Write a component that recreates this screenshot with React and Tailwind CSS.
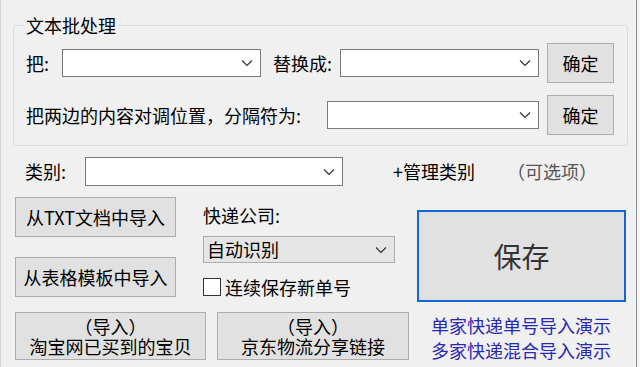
import React from "react";

const FONT = { fontFamily: '"Noto Sans CJK SC", "Noto Sans", sans-serif' };

function Chevron() {
  return (
    <svg width="12" height="8" viewBox="0 0 12 8" className="shrink-0">
      <polyline points="1,1.5 6,6.5 11,1.5" fill="none" stroke="#333" strokeWidth="1.2" />
    </svg>
  );
}

function Combo({ w, h = 28 }) {
  return (
    <div
      className="flex items-center justify-end bg-white border border-[#7a7a7a] pr-[7px] shrink-0"
      style={{ width: w, height: h }}
    >
      <Chevron />
    </div>
  );
}

function Btn({ children, className = "" }) {
  return (
    <div
      className={
        "flex items-center justify-center bg-[#e1e1e1] border border-[#adadad] text-[18px] text-[#000] whitespace-nowrap shrink-0 " +
        className
      }
    >
      {children}
    </div>
  );
}

export default function App() {
  return (
    <div className="w-[640px] h-[367px] bg-[#f4f4f4] overflow-hidden" style={FONT}>
      <div className="w-[637px] h-[367px] bg-[#f0f0f0] border-l border-[#d4d4d4] border-r border-r-[#8a8a8a] pt-[25px] text-[#000]">
        {/* group box */}
        <div className="relative ml-[12px] w-[615px] h-[121px] border border-[#dcdcdc] rounded-[3px] pt-[17px] pl-[12px]">
          <div className="absolute left-[9px] top-[-13px] px-[3px] bg-[#f0f0f0] text-[18px] leading-[24px]">
            文本批处理
          </div>
          <div className="flex items-center h-[40px]">
            <span className="text-[18px] w-[36px] whitespace-nowrap">把:</span>
            <Combo w={199} />
            <span className="text-[18px] ml-[12px] w-[67px] whitespace-nowrap">替换成:</span>
            <Combo w={199} />
            <Btn className="ml-[8px] w-[67px] h-[40px]">确定</Btn>
          </div>
          <div className="flex items-center h-[40px] mt-[12px]">
            <span className="text-[18px] w-[301px] whitespace-nowrap">把两边的内容对调位置，分隔符为:</span>
            <Combo w={212} />
            <Btn className="ml-[8px] w-[67px] h-[40px]">确定</Btn>
          </div>
        </div>

        {/* category row */}
        <div className="flex items-center h-[29px] mt-[11px] pl-[24px]">
          <span className="text-[18px] w-[60px] whitespace-nowrap">类别:</span>
          <Combo w={258} h={29} />
          <span className="text-[18px] ml-[50px] whitespace-nowrap">+管理类别</span>
          <span className="text-[18px] ml-[32px] text-[#555] whitespace-nowrap">（可选项）</span>
        </div>

        {/* lower area */}
        <div className="flex mt-[11px] pl-[14px]">
          <div className="w-[394px] flex flex-col">
            <div className="flex">
              <div className="w-[161px] flex flex-col gap-[20px]">
                <Btn className="h-[40px]">从TXT文档中导入</Btn>
                <Btn className="h-[40px]">从表格模板中导入</Btn>
              </div>
              <div className="ml-[27px] w-[192px] flex flex-col">
                <div className="mt-[6px] text-[18px] leading-[24px] whitespace-nowrap">快递公司:</div>
                <div className="mt-[9px] h-[27px] flex items-center justify-between bg-[#e5e5e5] border border-[#adadad] pl-[3px] pr-[7px]">
                  <span className="text-[18px] whitespace-nowrap">自动识别</span>
                  <Chevron />
                </div>
                <div className="mt-[14px] h-[20px] flex items-center">
                  <div className="w-[18px] h-[18px] border border-[#333] bg-white shrink-0" />
                  <span className="ml-[4px] text-[18px] whitespace-nowrap">连续保存新单号</span>
                </div>
              </div>
            </div>
            <div className="flex mt-[15px] gap-[11px]">
              <Btn className="w-[191px] h-[48px] flex-col leading-[20px]">
                <span>（导入）</span>
                <span>淘宝网已买到的宝贝</span>
              </Btn>
              <Btn className="w-[192px] h-[48px] flex-col leading-[20px]">
                <span>（导入）</span>
                <span>京东物流分享链接</span>
              </Btn>
            </div>
          </div>
          <div className="ml-[8px] flex flex-col">
            <div className="mt-[13px] w-[209px] h-[92px] flex items-center justify-center bg-[#e1e1e1] border-2 border-[#1468d4] text-[28px] text-[#333]">
              保存
            </div>
            <div className="mt-[11px] pl-[14px] text-[18px] leading-[25px] text-[#2a2ab0] whitespace-nowrap">
              <div>单家快递单号导入演示</div>
              <div>多家快递混合导入演示</div>
            </div>
          </div>
        </div>
      </div>
    </div>
  );
}
